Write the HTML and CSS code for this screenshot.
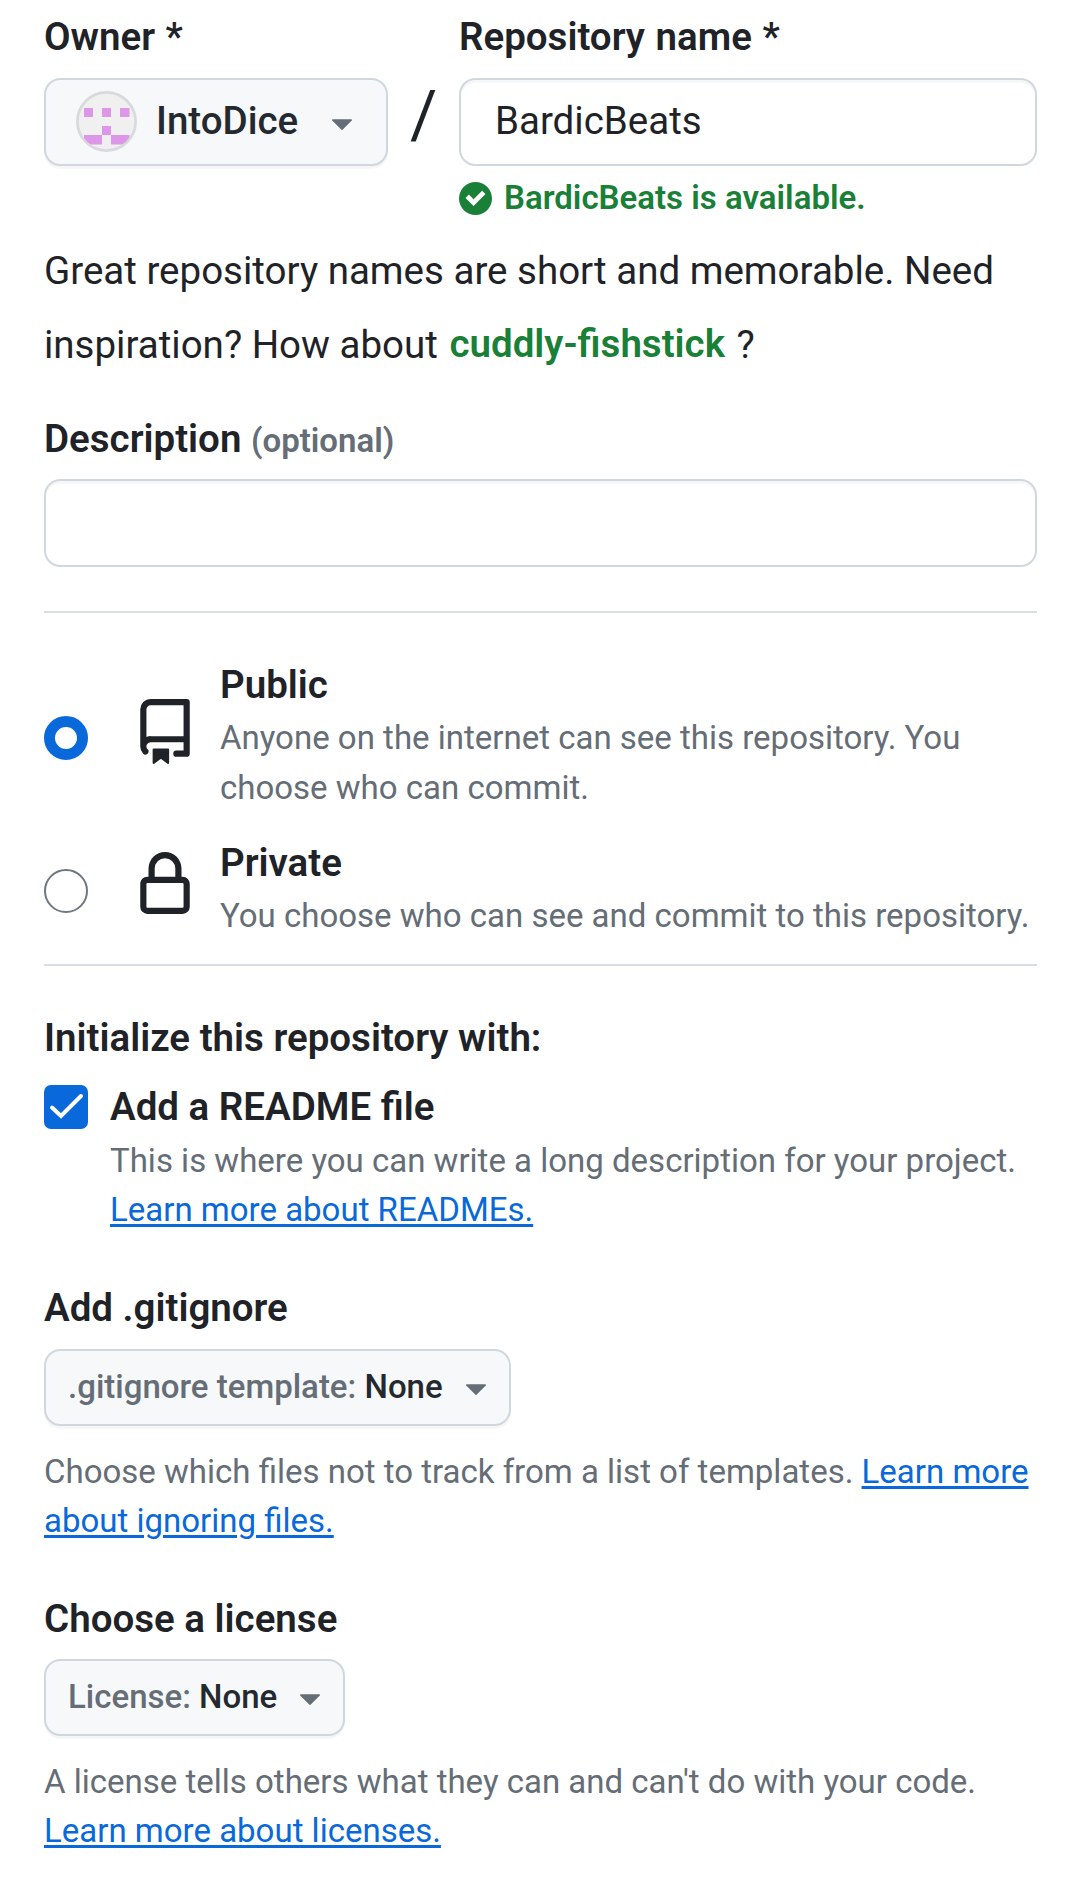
FILE: index.html
```html
<!DOCTYPE html>
<html lang="en">
<head>
<meta charset="utf-8">
<title>Create a new repository</title>
<link rel="stylesheet" href="styles.css">
</head>
<body>
<form class="new-repo">
  <div class="name-row">
    <div class="owner">
      <div class="label">Owner *</div>
      <button type="button" class="btn btn-owner">
        <svg class="avatar" viewBox="0 0 61 61" aria-hidden="true">
          <defs><clipPath id="avatar-clip"><circle cx="30.5" cy="30.5" r="28"/></clipPath></defs>
          <circle cx="30.5" cy="30.5" r="29.1" fill="#f0f0f0" stroke="#d8dadd" stroke-width="2.75"/>
          <path clip-path="url(#avatar-clip)" fill="#dd97e8" d="M8 17h9v9H8zM26 17h9v9h-9zM44 17h9.500v9H44zM26 35h9v9h-9zM8 44h18v9.500H8zM35 44h18.500v9.500H35z"/>
        </svg>
        <span class="owner-name">IntoDice</span>
        <svg class="caret" viewBox="0 0 16 16"><path d="m4.427 7.427 3.396 3.396a.25.25 0 0 0 .354 0l3.396-3.396A.25.25 0 0 0 11.396 7H4.604a.25.25 0 0 0-.177.427Z"/></svg>
      </button>
    </div>
    <div class="slash">/</div>
    <div class="repo">
      <div class="label">Repository name *</div>
      <input class="field" type="text" value="BardicBeats">
      <div class="status">
        <svg class="status-icon" viewBox="0 0 12 12"><path d="M6 0a6 6 0 1 1 0 12A6 6 0 0 1 6 0Zm-.705 8.737L9.630 4.403 8.392 3.166 5.295 6.263l-1.700-1.702L2.356 5.800l2.938 2.938Z"/></svg>
        <span>BardicBeats is available.</span>
      </div>
    </div>
  </div>

  <p class="hint">Great repository names are short and memorable. Need inspiration? How about <strong class="suggestion">cuddly-fishstick</strong> ?</p>

  <div class="label label-desc">Description <span class="optional">(optional)</span></div>
  <input class="field" type="text">

  <div class="visibility">
    <label class="choice">
      <span class="radio radio-on"></span>
      <svg class="choice-icon" viewBox="0 0 16 16"><path d="M2 2.500A2.500 2.500 0 0 1 4.500 0h8.750a.75.75 0 0 1 .75.75v12.500a.75.75 0 0 1-.75.75h-2.500a.75.75 0 0 1 0-1.500h1.750v-2h-8a1 1 0 0 0-.714 1.700.75.75 0 1 1-1.072 1.050A2.495 2.495 0 0 1 2 11.500Zm10.500-1h-8a1 1 0 0 0-1 1v6.708A2.486 2.486 0 0 1 4.500 9h8ZM5 12.250a.25.25 0 0 1 .25-.25h3.500a.25.25 0 0 1 .25.25v3.250a.25.25 0 0 1-.4.2l-1.450-1.087a.249.249 0 0 0-.3 0L5.400 15.700a.25.25 0 0 1-.4-.2Z"/></svg>
      <span class="choice-text">
        <span class="title">Public</span>
        <span class="note">Anyone on the internet can see this repository. You choose who can commit.</span>
      </span>
    </label>
    <label class="choice">
      <span class="radio"></span>
      <svg class="choice-icon" viewBox="0 0 16 16"><path d="M4 4a4 4 0 0 1 8 0v2h.25c.966 0 1.750.784 1.750 1.750v5.500A1.750 1.750 0 0 1 12.250 15h-8.500A1.750 1.750 0 0 1 2 13.250v-5.500C2 6.784 2.784 6 3.750 6H4Zm8.250 3.500h-8.500a.25.25 0 0 0-.25.25v5.500c0 .138.112.25.25.25h8.500a.25.25 0 0 0 .25-.25v-5.500a.25.25 0 0 0-.25-.25ZM10.500 6V4a2.500 2.500 0 1 0-5 0v2Z"/></svg>
      <span class="choice-text">
        <span class="title">Private</span>
        <span class="note">You choose who can see and commit to this repository.</span>
      </span>
    </label>
  </div>

  <div class="label label-init">Initialize this repository with:</div>
  <label class="readme">
    <svg class="checkbox" viewBox="0 0 44 44"><rect width="44" height="44" rx="7"/><path d="M8 22.500 17 31 37 11"/></svg>
    <span class="choice-text">
      <span class="title">Add a README file</span>
      <span class="note">This is where you can write a long description for your project. <a class="link" href="#">Learn more about READMEs.</a></span>
    </span>
  </label>

  <section class="template">
    <div class="label">Add .gitignore</div>
    <button type="button" class="btn btn-select">
      <span class="select-text"><span class="muted">.gitignore template:</span> None</span>
      <svg class="caret" viewBox="0 0 16 16"><path d="m4.427 7.427 3.396 3.396a.25.25 0 0 0 .354 0l3.396-3.396A.25.25 0 0 0 11.396 7H4.604a.25.25 0 0 0-.177.427Z"/></svg>
    </button>
    <p class="note template-note">Choose which files not to track from a list of templates. <a class="link" href="#">Learn more about ignoring files.</a></p>
  </section>

  <section class="template template-license">
    <div class="label">Choose a license</div>
    <button type="button" class="btn btn-select">
      <span class="select-text"><span class="muted">License:</span> None</span>
      <svg class="caret" viewBox="0 0 16 16"><path d="m4.427 7.427 3.396 3.396a.25.25 0 0 0 .354 0l3.396-3.396A.25.25 0 0 0 11.396 7H4.604a.25.25 0 0 0-.177.427Z"/></svg>
    </button>
    <p class="note template-note">A license tells others what they can and can't do with your code. <a class="link" href="#">Learn more about licenses.</a></p>
  </section>
</form>
</body>
</html>
```
FILE: styles.css
```css
* {
  box-sizing: border-box;
}

body {
  margin: 0;
  background: #fff;
  color: #1f2328;
  font: 400 38.5px/58px Roboto, sans-serif;
}

.new-repo {
  display: flex;
  flex-direction: column;
  padding: 8px 43px 0 44px;
}

.name-row {
  display: flex;
}

.name-row .label {
  word-spacing: 1px;
}

.owner {
  width: 344px;
}

.repo {
  flex: 1;
}

.label {
  font-weight: 600;
}

.btn {
  display: flex;
  align-items: center;
  background: #f6f8fa;
  border: 2px solid #d0d7de;
  border-radius: 16.5px;
  box-shadow: 0 2.75px 0 rgba(31, 35, 40, 0.04);
  color: #24292f;
  font-family: inherit;
  font-weight: 500;
}

.btn-owner {
  width: 344px;
  height: 88px;
  margin-top: 12px;
  padding: 0 22px 0 30px;
  font-size: 38.5px;
}

.avatar {
  width: 61px;
  height: 61px;
  margin-bottom: 1px;
}

.owner-name {
  margin-left: 19px;
  padding-bottom: 3px;
}

.caret {
  width: 44px;
  height: 44px;
  fill: #656d76;
}

.btn-owner .caret {
  margin-left: auto;
}

.slash {
  width: 71px;
  padding-top: 71px;
  font-size: 66px;
  line-height: 74px;
  text-align: center;
}

.field {
  display: block;
  width: 100%;
  height: 88px;
  margin: 12px 0 0;
  padding: 0 33px 3px 34px;
  background: #fff;
  border: 2px solid #d0d7de;
  border-radius: 16.5px;
  box-shadow: inset 0 2.75px 0 rgba(208, 215, 222, 0.2);
  color: inherit;
  font: inherit;
}

.status {
  display: flex;
  align-items: center;
  gap: 12px;
  margin-top: 7px;
  color: #1a7f37;
  font-size: 33px;
  font-weight: 600;
  line-height: 50px;
}

.status-icon {
  width: 33px;
  height: 33px;
  fill: #1a7f37;
}

.hint {
  margin: 11px 0 0;
  line-height: 74px;
}

.suggestion {
  margin: 0 2px;
  color: #1a7f37;
  font-weight: 600;
  line-height: 1;
  vertical-align: 1px;
}

.label-desc {
  margin-top: 28px;
}

.label-desc + .field {
  margin-top: 11px;
}

.optional {
  color: #656d76;
  font-size: 33px;
  font-weight: 600;
  line-height: 1;
}

.visibility {
  display: flex;
  flex-direction: column;
  gap: 23px;
  margin-top: 44px;
  padding: 44px 0 23px;
  border: solid #d8dee4;
  border-width: 2px 0;
}

.choice {
  display: flex;
  align-items: center;
}

.radio {
  width: 44px;
  height: 44px;
  margin-top: 6px;
  border: 2px solid #6e7781;
  border-radius: 50%;
}

.radio-on {
  border: 11px solid #0969da;
}

.choice-icon {
  width: 66px;
  height: 66px;
  margin: 0 22px 6px 44px;
  fill: #1f2328;
}

.choice-text {
  flex: 1;
}

.title {
  display: block;
  padding-bottom: 1px;
  font-weight: 600;
  line-height: 55px;
}

.readme .title {
  padding-bottom: 2px;
}

.note {
  display: block;
  color: #656d76;
  font-size: 33px;
  line-height: 49.5px;
}

.label-init {
  margin-top: 43px;
}

.readme {
  display: flex;
  gap: 22px;
  margin-top: 12px;
}

.checkbox {
  width: 44px;
  height: 44px;
  margin-top: 6px;
  fill: #0969da;
}

.checkbox path {
  fill: none;
  stroke: #fff;
  stroke-width: 4;
  stroke-linecap: round;
}

.link {
  color: #0969da;
  text-decoration: underline;
  text-decoration-thickness: 3px;
  text-underline-offset: 3px;
}

.template {
  margin-top: 44px;
}

.btn-select {
  height: 77px;
  margin-top: 12px;
  padding: 0 11px 0 22px;
  gap: 11px;
  font-size: 33px;
}

.select-text {
  padding-bottom: 2px;
}

.template-license .btn-select {
  margin-top: 11px;
}

.muted {
  color: #656d76;
}

.template-note {
  margin: 21px 0 0;
}
```
